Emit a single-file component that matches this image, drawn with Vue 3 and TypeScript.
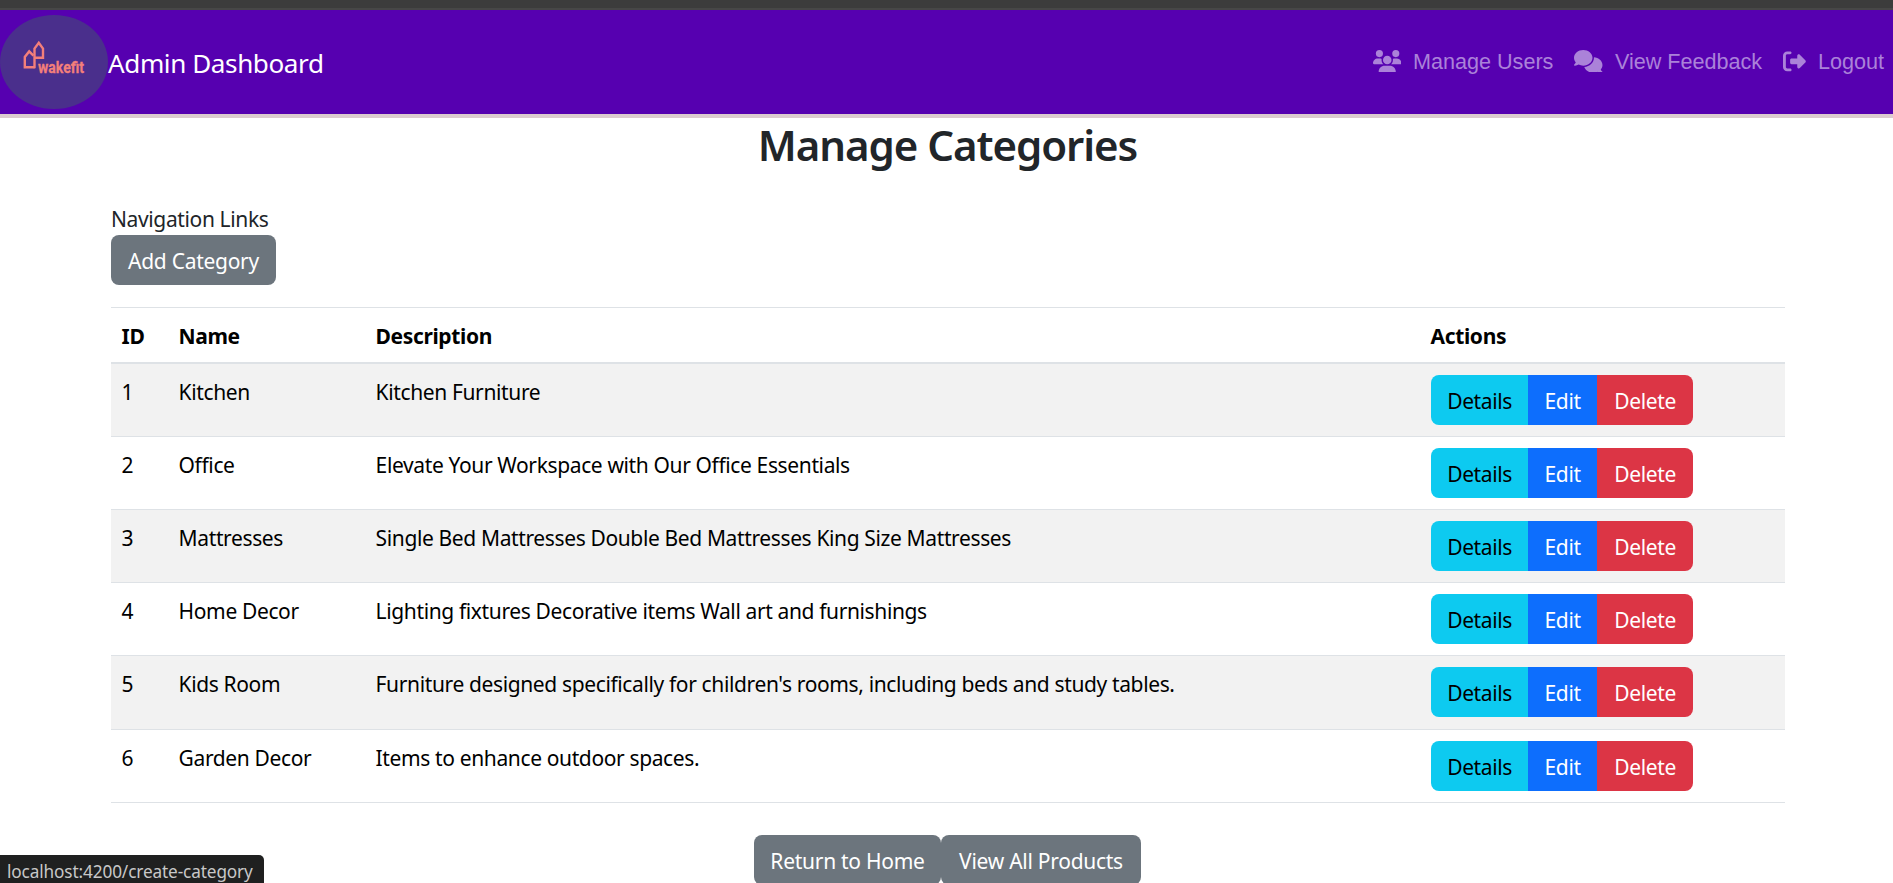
<script setup lang="ts">
interface Category {
  id: number
  name: string
  description: string
}

interface NavLink {
  label: string
  kind: string
  viewBox: string
  path: string
}

const categories: Category[] = [
  { id: 1, name: 'Kitchen', description: 'Kitchen Furniture' },
  { id: 2, name: 'Office', description: 'Elevate Your Workspace with Our Office Essentials' },
  { id: 3, name: 'Mattresses', description: 'Single Bed Mattresses Double Bed Mattresses King Size Mattresses' },
  { id: 4, name: 'Home Decor', description: 'Lighting fixtures Decorative items Wall art and furnishings' },
  { id: 5, name: 'Kids Room', description: "Furniture designed specifically for children's rooms, including beds and study tables." },
  { id: 6, name: 'Garden Decor', description: 'Items to enhance outdoor spaces.' },
]

const links: NavLink[] = [
  {
    label: 'Manage Users',
    kind: 'users',
    viewBox: '0 0 640 512',
    path: 'M144 0a80 80 0 1 1 0 160A80 80 0 1 1 144 0zM512 0a80 80 0 1 1 0 160A80 80 0 1 1 512 0zM0 298.7C0 239.8 47.8 192 106.7 192h42.7c15.9 0 31 3.5 44.6 9.7c-1.3 7.2-1.9 14.7-1.9 22.3c0 38.2 16.8 72.5 43.3 96c-.2 0-.4 0-.7 0H21.3C9.6 320 0 310.4 0 298.7zM405.3 320c-.2 0-.4 0-.7 0c26.6-23.5 43.3-57.8 43.3-96c0-7.6-.7-15-1.9-22.3c13.6-6.3 28.7-9.7 44.6-9.7h42.7C592.2 192 640 239.8 640 298.7c0 11.8-9.6 21.3-21.3 21.3H405.3zM224 224a96 96 0 1 1 192 0 96 96 0 1 1 -192 0zM128 485.3C128 411.7 187.7 352 261.3 352H378.7C452.3 352 512 411.7 512 485.3c0 14.7-11.9 26.7-26.7 26.7H154.7c-14.7 0-26.7-11.9-26.7-26.7z',
  },
  {
    label: 'View Feedback',
    kind: 'comments',
    viewBox: '0 0 640 512',
    path: 'M208 352c114.9 0 208-78.8 208-176S322.9 0 208 0S0 78.8 0 176c0 38.6 14.7 74.3 39.6 103.4c-3.5 9.4-8.7 17.7-14.2 24.7c-4.8 6.2-9.7 11-13.3 14.3c-1.8 1.6-3.3 2.9-4.3 3.7c-.5 .4-.9 .7-1.1 .8l-.2 .2C1 327.2-1.4 334.4 .8 340.9S9.1 352 16 352c21.8 0 43.8-5.6 62.1-12.5c9.2-3.5 17.8-7.4 25.2-11.4C134.1 343.3 169.8 352 208 352zM448 176c0 112.3-99.1 196.9-216.5 207C255.8 457.4 336.4 512 432 512c38.2 0 73.9-8.7 104.7-23.9c7.5 4 16 7.9 25.2 11.4c18.3 6.9 40.3 12.5 62.1 12.5c6.9 0 13.1-4.5 15.2-11.1c2.1-6.6-.2-13.8-5.8-17.9l-.2-.2c-.2-.2-.6-.4-1.1-.8c-1-.8-2.5-2-4.3-3.7c-3.6-3.3-8.5-8.1-13.3-14.3c-5.5-7-10.7-15.4-14.2-24.7c24.9-29 39.6-64.7 39.6-103.4c0-92.8-84.9-168.9-192.6-175.5c.4 5.1 .6 10.3 .6 15.5z',
  },
  {
    label: 'Logout',
    kind: 'logout',
    viewBox: '0 0 512 512',
    path: 'M377.9 105.9L500.7 228.7c7.2 7.2 11.3 17.1 11.3 27.3s-4.1 20.1-11.3 27.3L377.9 406.1c-6.4 6.4-15 9.9-24 9.9c-18.7 0-33.9-15.2-33.9-33.9l0-62.1-128 0c-17.7 0-32-14.3-32-32l0-64c0-17.7 14.3-32 32-32l128 0 0-62.1c0-18.7 15.2-33.9 33.9-33.9c9 0 17.6 3.6 24 9.9zM160 96L96 96c-17.7 0-32 14.3-32 32l0 256c0 17.7 14.3 32 32 32l64 0c17.7 0 32 14.3 32 32s-14.3 32-32 32l-64 0c-53 0-96-43-96-96L0 128C0 75 43 32 96 32l64 0c17.7 0 32 14.3 32 32s-14.3 32-32 32z',
  },
]
</script>

<template>
  <div class="page">
    <div class="window-edge"></div>
    <header class="navbar">
      <a class="brand">
        <svg class="logo" width="108" height="94" viewBox="0 0 108 94">
          <ellipse cx="54" cy="47" rx="54" ry="47" fill="#4a2f8c" />
          <g fill="none" stroke="#f37f7a" stroke-width="2.4" stroke-linejoin="miter">
            <path d="M34.8 52.3H24.8V42L29.2 36.4L33.4 40.6" />
            <path d="M34.5 53.3V33.6L38.8 27.8L43 33.6V42.8H35.5" />
          </g>
          <text class="logo-text" x="38" y="58" textLength="46" lengthAdjust="spacingAndGlyphs">wakefit</text>
        </svg>
        <span class="brand-text">Admin Dashboard</span>
      </a>
      <nav class="nav">
        <a v-for="link in links" :key="link.kind" class="nav-link" :class="link.kind">
          <svg class="icon" :viewBox="link.viewBox"><path :d="link.path" fill="currentColor" /></svg>
          <span class="nav-label">{{ link.label }}</span>
        </a>
      </nav>
    </header>

    <main class="container">
      <h1>Manage Categories</h1>
      <div class="nav-title">Navigation Links</div>
      <button class="btn secondary add">Add Category</button>

      <table>
        <colgroup>
          <col class="c-id" /><col class="c-name" /><col class="c-desc" /><col class="c-act" />
        </colgroup>
        <thead>
          <tr>
            <th>ID</th>
            <th>Name</th>
            <th>Description</th>
            <th>Actions</th>
          </tr>
        </thead>
        <tbody>
          <tr v-for="c in categories" :key="c.id">
            <td>{{ c.id }}</td>
            <td>{{ c.name }}</td>
            <td>{{ c.description }}</td>
            <td class="actions">
              <div class="btn-group">
                <button class="btn info">Details</button>
                <button class="btn primary">Edit</button>
                <button class="btn danger">Delete</button>
              </div>
            </td>
          </tr>
        </tbody>
      </table>

      <div class="footer">
        <button class="btn secondary home">Return to Home</button>
        <button class="btn secondary products">View All Products</button>
      </div>
    </main>

    <div class="status">localhost:4200/create-category</div>
  </div>
</template>

<style>
body {
  margin: 0;
  background: #fff;
  overflow: hidden;
}
</style>

<style scoped>
.page {
  position: relative;
  box-sizing: border-box;
  height: 883px;
  overflow: hidden;
  font-family: "Noto Sans", "Open Sans", sans-serif;
  font-size: 21px;
  line-height: 32px;
  letter-spacing: -0.37px;
  color: #212529;
}
.window-edge {
  box-sizing: border-box;
  height: 10px;
  background: #3c3c3c;
  border-bottom: 2px solid #474747;
}
.navbar {
  box-sizing: border-box;
  display: flex;
  align-items: center;
  justify-content: space-between;
  height: 108px;
  padding-right: 9px;
  background: #5600b0;
  border-bottom: 4px solid #dccbcf;
}
.brand {
  display: flex;
  align-items: center;
  color: #fff;
}
.logo {
  display: block;
}
.logo-text {
  font: bold 17px "Roboto", sans-serif;
  letter-spacing: 0;
  fill: #f37f7a;
  stroke: #f37f7a;
  stroke-width: 0.3px;
}
.brand-text {
  padding-top: 2px;
  font-size: 26.1px;
  line-height: 40px;
  letter-spacing: -0.42px;
}
.nav {
  display: flex;
  gap: 21px;
  padding-bottom: 2px;
  color: #ab82d9;
  font-family: "Liberation Sans", Arial, sans-serif;
  font-size: 21.6px;
  letter-spacing: 0;
}
.nav-link {
  display: flex;
  align-items: center;
}
.icon {
  height: 22.8px;
  margin-right: 12px;
}
.nav-label {
  padding-top: 2px;
}
.container {
  width: 1674px;
  margin: 0 auto 0 111px;
}
h1 {
  margin: 0;
  padding: 1px 1px 33px 0;
  text-align: center;
  font-size: 42px;
  line-height: 51px;
  font-weight: 600;
  letter-spacing: -1.05px;
}
.nav-title {
  height: 32px;
  letter-spacing: -0.37px;
}
.btn {
  box-sizing: border-box;
  display: block;
  height: 50px;
  padding: 1px 0 0;
  border: 0;
  border-radius: 8px;
  font: inherit;
  letter-spacing: inherit;
  text-align: center;
}
.secondary {
  background: #6c757d;
  color: #fff;
  letter-spacing: -0.27px;
}
.add {
  width: 165px;
}
table {
  width: 1674px;
  margin-top: 22px;
  table-layout: fixed;
  border-collapse: separate;
  border-spacing: 0;
  color: #000;
}
.c-id { width: 57px; }
.c-name { width: 197px; }
.c-desc { width: 1055px; }
.c-act { width: 365px; }
th,
td {
  box-sizing: border-box;
  padding: 11.6px 0 0 10.6px;
  text-align: left;
  vertical-align: top;
  white-space: nowrap;
  border-bottom: 1px solid #dee2e6;
}
th {
  height: 57px;
  border-top: 1px solid #dee2e6;
  border-bottom: 2px solid #dee2e6;
}
td {
  height: 73px;
}
tr:nth-child(5) td {
  height: 74px;
}
td.actions {
  padding-top: 11px;
}
tbody tr:nth-child(odd) td {
  background: #f2f2f2;
}
.btn-group {
  display: flex;
}
.btn-group .btn {
  padding: 2px 0 0 1px;
  border-radius: 0;
}
.btn-group .info {
  width: 97px;
  background: #0dcaf0;
  color: #000;
  border-radius: 8px 0 0 8px;
}
.btn-group .primary {
  width: 69px;
  background: #0d6efd;
  color: #fff;
}
.btn-group .danger {
  width: 96px;
  background: #dc3545;
  color: #fff;
  border-radius: 0 8px 8px 0;
}
.footer {
  display: flex;
  justify-content: center;
  margin: 32px 1px 0 0;
}
.home { width: 187px; }
.products { width: 200px; }
.status {
  position: absolute;
  left: 0;
  bottom: 0;
  box-sizing: border-box;
  width: 264px;
  height: 28px;
  padding-left: 7px;
  border-radius: 0 5px 0 0;
  background: #1f2020;
  color: #c8c8c8;
  font-size: 17.2px;
  line-height: 33px;
  letter-spacing: -0.12px;
  white-space: nowrap;
}
</style>
